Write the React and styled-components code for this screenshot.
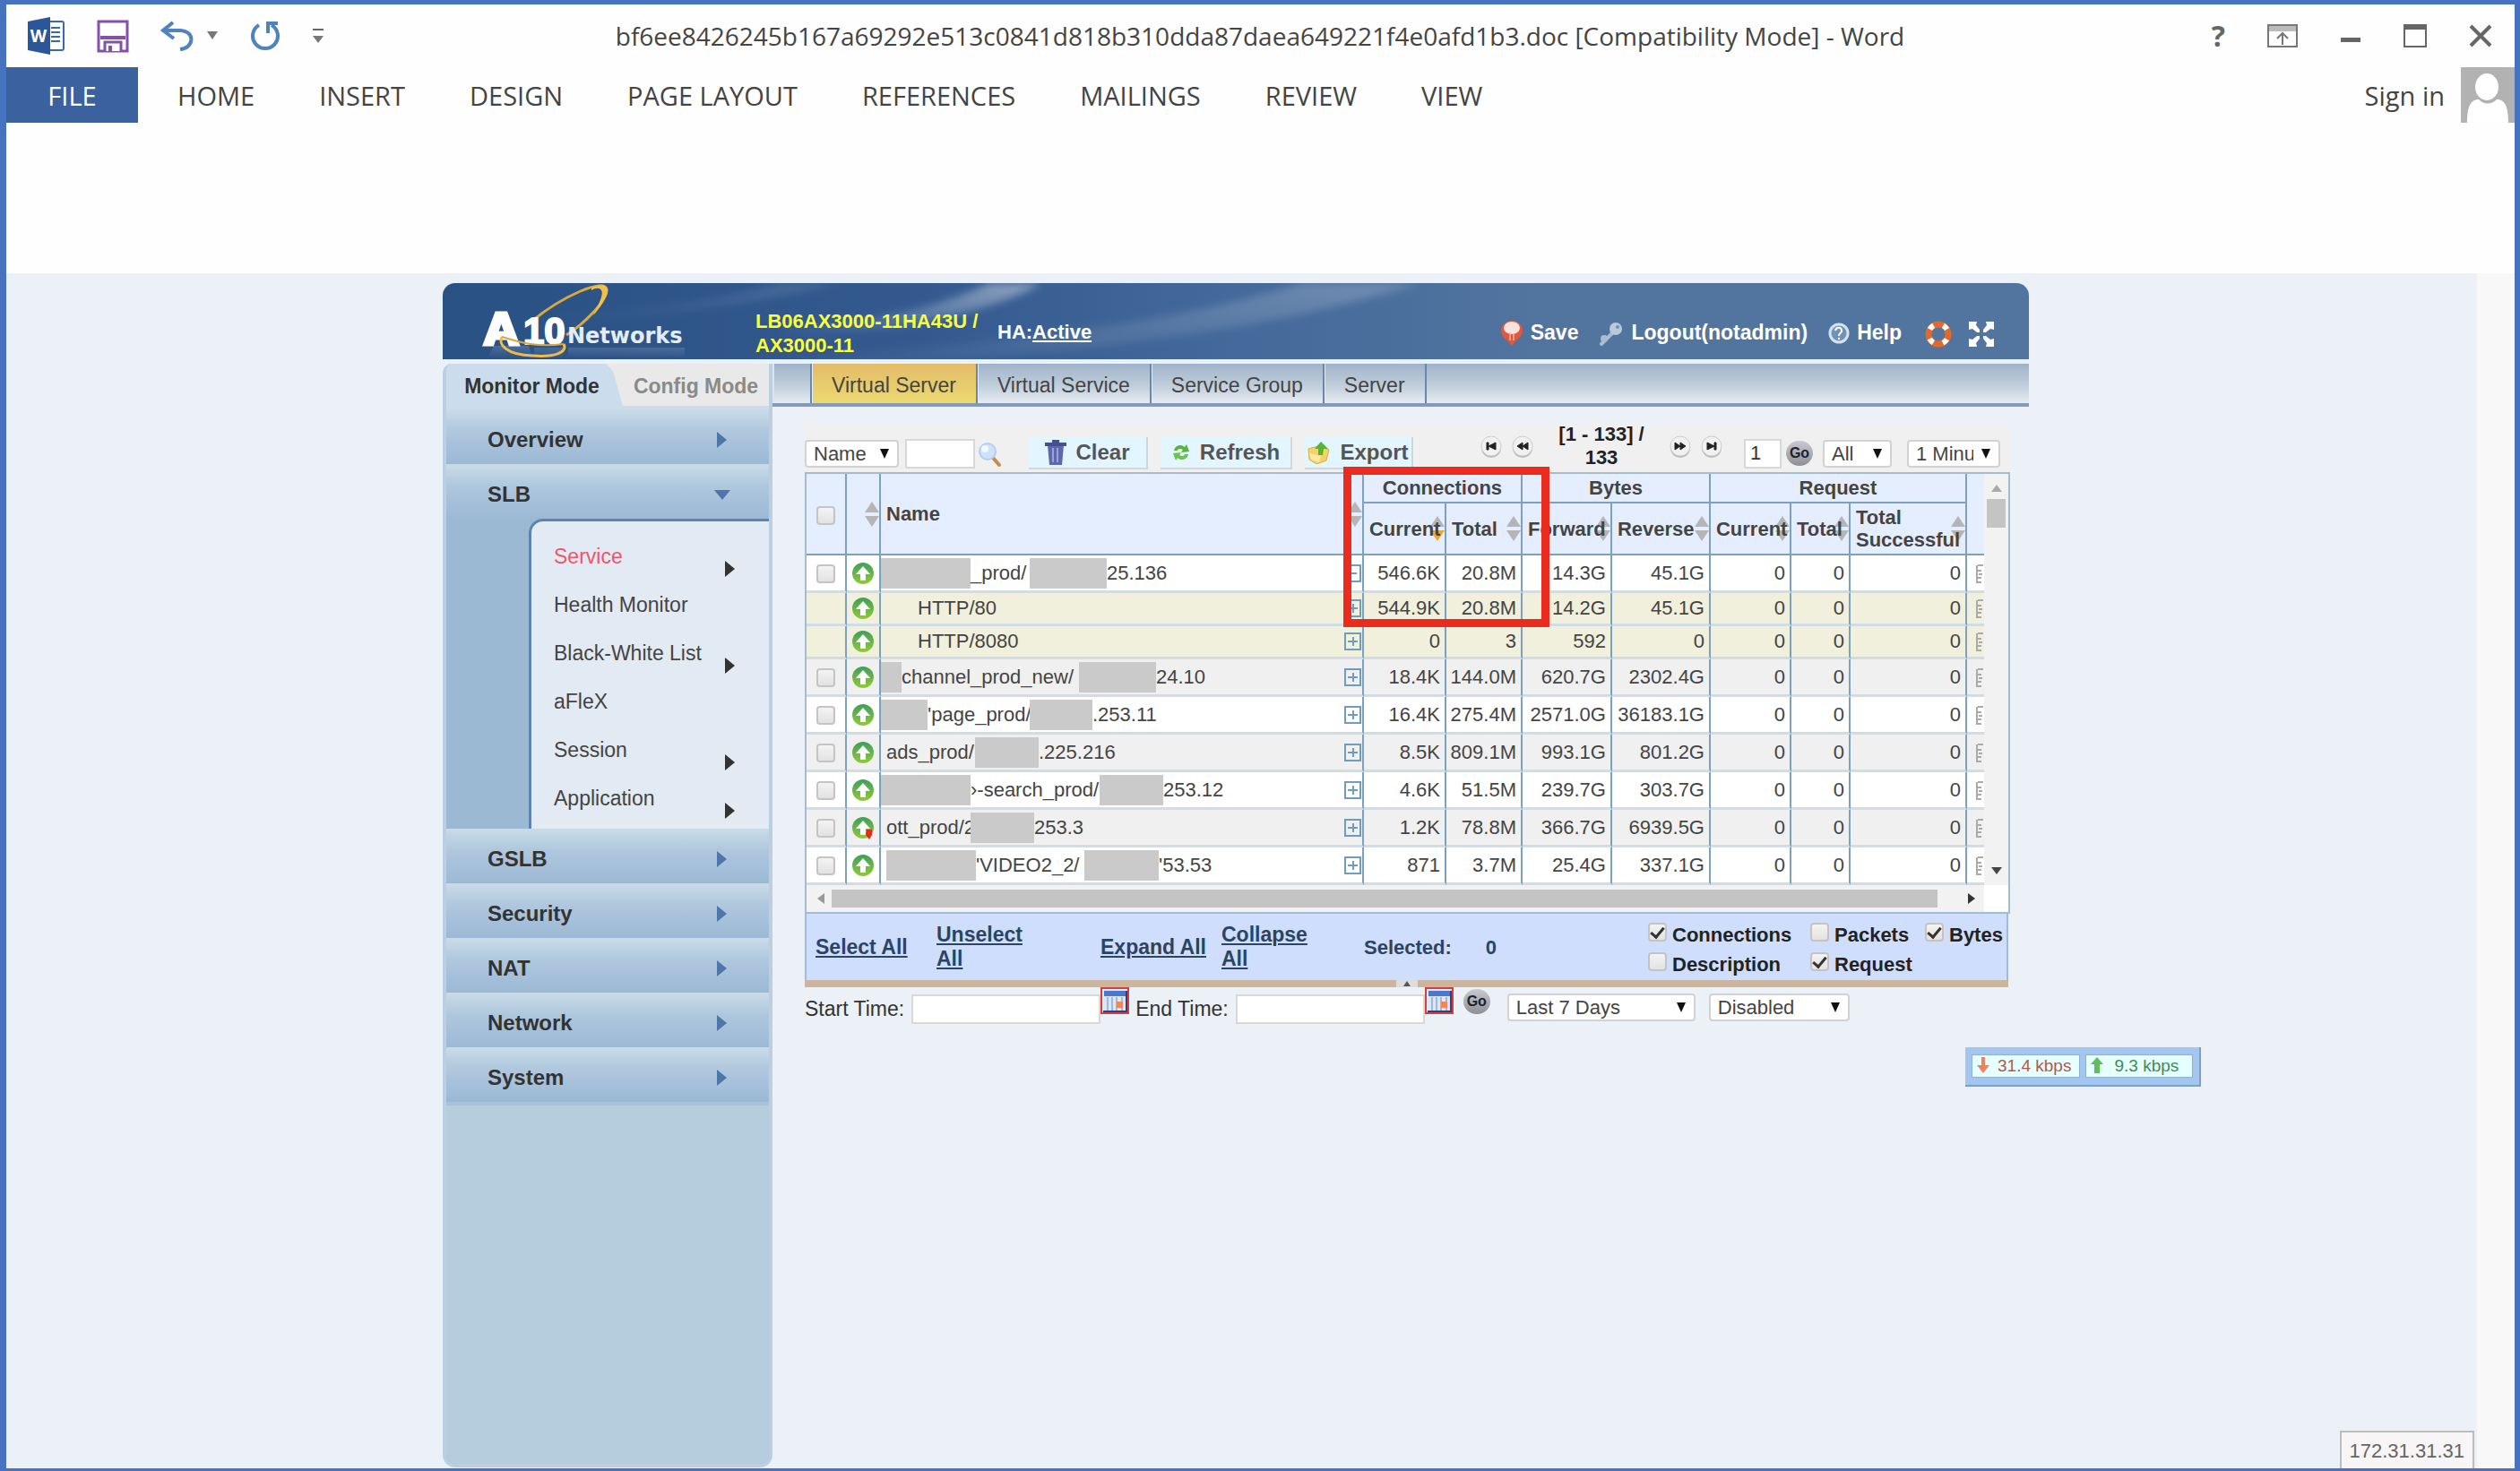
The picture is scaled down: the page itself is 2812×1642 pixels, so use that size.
import React from 'react'
import styled, {createGlobalStyle} from 'styled-components'

const GlobalStyle = createGlobalStyle`
    * { box-sizing: border-box; }
    body { margin: 0; }
    button, input, select { font: inherit; color: inherit; margin: 0; }
    button { border: 0; background: none; padding: 0; cursor: pointer; }
`

const ribbonTabs = ['HOME', 'INSERT', 'DESIGN', 'PAGE LAYOUT', 'REFERENCES', 'MAILINGS', 'REVIEW', 'VIEW']
const subMenu = [
    {label: 'Service', active: true, more: true},
    {label: 'Health Monitor'},
    {label: 'Black-White List', more: true},
    {label: 'aFleX'},
    {label: 'Session', more: true},
    {label: 'Application', more: true},
]
const lowerMenu = ['GSLB', 'Security', 'NAT', 'Network', 'System']
const columns = [45, 38, null, 92, 85, 100, 110, 90, 66, 130, 19]

// mask = width of a hidden part of the name, w = width kept for a visible part
const rows = [
    {name: [{mask: 100}, {t: '_prod/', w: 66}, {mask: 86}, {t: '25.136'}], open: true, data: ['546.6K', '20.8M', '14.3G', '45.1G']},
    {sub: 'HTTP/80', data: ['544.9K', '20.8M', '14.2G', '45.1G']},
    {sub: 'HTTP/8080', data: ['0', '3', '592', '0']},
    {name: [{mask: 23}, {t: 'channel_prod_new/', w: 198}, {mask: 86}, {t: '24.10'}], data: ['18.4K', '144.0M', '620.7G', '2302.4G']},
    {name: [{mask: 52}, {t: "'page_prod/", w: 114}, {mask: 70}, {t: '.253.11'}], data: ['16.4K', '275.4M', '2571.0G', '36183.1G']},
    {name: [{t: 'ads_prod/', w: 99}, {mask: 71}, {t: '.225.216'}], data: ['8.5K', '809.1M', '993.1G', '801.2G']},
    {name: [{mask: 100}, {t: '›-search_prod/', w: 144}, {mask: 71}, {t: '253.12'}], data: ['4.6K', '51.5M', '239.7G', '303.7G']},
    {name: [{t: 'ott_prod/2', w: 94}, {mask: 71}, {t: '253.3'}], warn: true, data: ['1.2K', '78.8M', '366.7G', '6939.5G']},
    {name: [{mask: 100}, {t: "'VIDEO2_2/", w: 121}, {mask: 83}, {t: "'53.53"}], inset: true, data: ['871', '3.7M', '25.4G', '337.1G']},
]

const WordIcon = () => (
    <svg width="42" height="42" viewBox="0 0 42 42" aria-hidden="true">
        <rect x="20" y="5" width="20" height="32" rx="2" fill="#fff" stroke="#3b69b0" strokeWidth="2"/>
        <path d="M26 12h10M26 17h10M26 22h10M26 27h10" stroke="#3b69b0" strokeWidth="2"/>
        <path d="M0 5L25 0V42L0 37z" fill="#2b579a"/>
        <text x="12" y="28" textAnchor="middle" fontSize="19" fontWeight="700" fill="#fff" fontFamily="Open Sans, sans-serif">W</text>
    </svg>
)
const DiskIcon = () => (
    <svg width="36" height="37" viewBox="0 0 36 37" aria-hidden="true">
        <path d="M2 2H34V35H2z" fill="#fff" stroke="#8450a8" strokeWidth="3"/>
        <path d="M4 20H32" stroke="#8450a8" strokeWidth="4"/>
        <path d="M9 35V25H27V35" fill="#fff" stroke="#8450a8" strokeWidth="3"/>
        <path d="M13 29h4v6h-4z" fill="#8450a8"/>
    </svg>
)
const UndoIcon = () => (
    <svg width="37" height="34" viewBox="0 0 37 34" fill="none" stroke="#4f83bd" strokeWidth="4" aria-hidden="true">
        <path d="M14 2L3 11L15 20M4 11H22C40 12 37 31 22 32"/>
    </svg>
)
const RedoIcon = () => (
    <svg width="34" height="34" viewBox="0 0 34 34" fill="none" stroke="#4f83bd" strokeWidth="4" aria-hidden="true">
        <path d="M10 5A14 14 0 1 0 24 5M18 3H31M20 2V14"/>
    </svg>
)
const CaretIcon = ({bar}) => (
    <svg width="14" height="18" viewBox="0 0 14 18" aria-hidden="true">
        {bar && <path d="M1 2H13" stroke="#666" strokeWidth="2"/>}
        <path d={bar ? 'M1 9H13L7 17z' : 'M1 4H13L7 13z'} fill="#777"/>
    </svg>
)
const Avatar = () => (
    <svg width="60" height="62" viewBox="0 0 60 62" aria-hidden="true">
        <path d="M0 0H60V62H0z" fill="#b2b2b2"/>
        <path d="M7 62C7 42 12 36 20 36C26 42 34 42 40 36C48 36 53 42 53 62z" fill="#fff"/>
        <ellipse cx="29" cy="22" rx="13" ry="15" fill="#fff"/>
    </svg>
)
const Logo = () => (
    <svg width="240" height="85" viewBox="0 0 240 85" role="img" aria-label="A10 Networks">
        <defs>
            <linearGradient id="fade" x1="0" y1="0" x2="0" y2="1">
                <stop offset="0" stopColor="#a9bdd8" stopOpacity="0.5"/>
                <stop offset="1" stopColor="#a9bdd8" stopOpacity="0"/>
            </linearGradient>
        </defs>
        <path d="M15 70H54L58 84H8zM60 72H92V84H60zM98 72H228V82H98z" fill="url(#fade)" opacity="0.5"/>
        <path d="M58 42C90 16 140 -8 141 8C140 20 118 44 96 58" fill="none" stroke="#d9a940" strokeWidth="3"/>
        <path d="M124 5C134 1 144 0 142 11C140 18 134 27 126 36C132 24 138 12 135 8C133 5 129 5 124 8z" fill="#f2bf4c"/>
        <text x="4" y="69" fontSize="50" fontWeight="700" fill="#fff" stroke="#fff" strokeWidth="3" fontFamily="DejaVu Sans, sans-serif">A</text>
        <text x="48" y="68" fontSize="42" fontWeight="700" fill="#fff" stroke="#fff" strokeWidth="2" fontFamily="Liberation Sans, sans-serif">10</text>
        <text x="97" y="67" fontSize="24" fontWeight="700" fill="#e4ecf6" fontFamily="DejaVu Sans, sans-serif">Networks</text>
        <path d="M24 60C20 68 28 80 58 81C84 83 98 77 93 68" fill="none" stroke="#f0bb4b" strokeWidth="3"/>
        <path d="M24 60C44 66 62 72 93 68" fill="none" stroke="#d9a940" strokeWidth="2"/>
    </svg>
)
const HeaderGlow = () => (
    <GlowSvg viewBox="0 0 1770 85" preserveAspectRatio="none" aria-hidden="true">
        <defs>
            <linearGradient id="ray" x1="0" y1="1" x2="1" y2="0">
                <stop offset="0" stopColor="#fff" stopOpacity="0"/>
                <stop offset="1" stopColor="#fff" stopOpacity="0.42"/>
            </linearGradient>
            <filter id="soft"><feGaussianBlur stdDeviation="5"/></filter>
        </defs>
        <g filter="url(#soft)" fill="url(#ray)">
            <path d="M380 50C480 45 560 25 610 0H668C610 35 500 54 380 60z"/>
            <path d="M330 85C560 75 800 50 960 0H1090C900 60 640 85 440 95z" opacity="0.5"/>
            <path d="M130 36C260 28 330 12 380 0H440C340 26 240 38 130 44z" opacity="0.3"/>
        </g>
    </GlowSvg>
)
const BulbIcon = () => (
    <svg width="26" height="30" viewBox="0 0 26 30" aria-hidden="true">
        <path d="M13 1C20 1 25 6 25 12C25 18 20 21 17 24L13 29L9 24C6 21 1 18 1 12C1 6 6 1 13 1z" fill="#e2583f"/>
        <ellipse cx="13" cy="9" rx="9" ry="7" fill="#fbe3dc"/>
        <path d="M11 16V23M15 16V23" stroke="#f09a86" strokeWidth="2"/>
    </svg>
)
const KeyIcon = () => (
    <svg width="28" height="28" viewBox="0 0 28 28" aria-hidden="true">
        <path d="M3 26L16 13" stroke="#a9bcd2" strokeWidth="4" strokeLinecap="round"/>
        <circle cx="19" cy="9" r="7" fill="#b9c9dc"/>
        <circle cx="6" cy="20" r="4" fill="#a9bcd2"/>
        <circle cx="21" cy="7" r="2" fill="#6f8fb4"/>
    </svg>
)
const HelpIcon = () => (
    <svg width="24" height="26" viewBox="0 0 24 26" aria-hidden="true">
        <circle cx="12" cy="13" r="10" fill="#6f92b8" stroke="#d5e2ee" strokeWidth="3"/>
        <path d="M8 10C9 5 16 6 15 11C14 13 12 13 12 16M12 18V20" fill="none" stroke="#fff" strokeWidth="2"/>
    </svg>
)
const RingIcon = () => (
    <svg width="30" height="30" viewBox="0 0 30 30" fill="none" aria-hidden="true">
        <circle cx="15" cy="15" r="11" stroke="#e3682c" strokeWidth="7"/>
        <circle cx="15" cy="15" r="11" stroke="#fff" strokeWidth="6" strokeDasharray="6 11" strokeDashoffset="-6"/>
    </svg>
)
const ExpandIcon = () => (
    <svg width="30" height="30" viewBox="0 0 30 30" aria-hidden="true">
        <path d="M1 1H10L9 5L13 10V13H10L5 9L1 10zM29 1V10L25 9L20 13H17V10L21 5L20 1zM1 29V20L5 21L10 17H13V20L9 25L10 29zM29 29H20L21 25L17 20V17H20L25 21L29 20z" fill="#fff"/>
    </svg>
)
const Triangle = ({color = '#4f76a8', down}) => (
    <svg width="18" height="18" viewBox="0 0 18 18" aria-hidden="true">
        <path d={down ? 'M0 4H18L9 15z' : 'M3 0L14 9L3 18z'} fill={color}/>
    </svg>
)
const SearchIcon = () => (
    <svg width="28" height="32" viewBox="0 0 28 32" aria-hidden="true">
        <path d="M18 21L25 29" stroke="#c98a4c" strokeWidth="4" strokeLinecap="round"/>
        <circle cx="12" cy="14" r="9" fill="#cfe2fb" stroke="#b5cef0" strokeWidth="2"/>
        <circle cx="9" cy="11" r="4" fill="#f2f8ff"/>
    </svg>
)
const TrashIcon = () => (
    <svg width="24" height="28" viewBox="0 0 24 28" aria-hidden="true">
        <path d="M3 6H21L19 28H5z" fill="#5d68ad"/>
        <path d="M0 3H8V0H16V3H24V7H0z" fill="#454f94"/>
        <path d="M9 9V25M14 9V25" stroke="#98a3d6" strokeWidth="2"/>
    </svg>
)
const RefreshIcon = () => (
    <svg width="22" height="26" viewBox="0 0 22 26" aria-hidden="true">
        <path d="M3 11C4 5 11 3 15 7L17 4L20 12L11 13L13 10C10 8 7 9 7 11z" fill="#58b43c"/>
        <path d="M19 15C18 21 11 23 7 19L5 22L2 14L11 13L9 16C12 18 15 17 15 15z" fill="#6cc24a"/>
    </svg>
)
const ExportIcon = () => (
    <svg width="26" height="26" viewBox="0 0 26 26" aria-hidden="true">
        <path d="M1 9L12 6L24 10L21 22L10 26L2 21z" fill="#f3d36a" stroke="#d8ae3c"/>
        <path d="M15 1L23 9H18L17 16H12V9H8z" fill="#55b432"/>
        <path d="M2 14L15 17L13 24L4 21z" fill="#fbe9a6"/>
    </svg>
)
const PagerIcon = ({d}) => (
    <svg width="24" height="26" viewBox="0 0 24 26" aria-hidden="true">
        <circle cx="12" cy="14" r="11" fill="#b9b9b9"/>
        <circle cx="12" cy="12" r="11" fill="#f1f1f1" stroke="#ccc"/>
        <path d={d} fill="#222" stroke="#222"/>
    </svg>
)
const UpIcon = ({warn}) => (
    <svg width="24" height="26" viewBox="0 0 24 26" aria-hidden="true">
        <defs>
            <linearGradient id="green" x1="0" y1="0" x2="0" y2="1">
                <stop offset="0" stopColor="#3f9f5a"/>
                <stop offset="1" stopColor="#93c93a"/>
            </linearGradient>
        </defs>
        <circle cx="12" cy="13" r="12" fill="url(#green)"/>
        <path d="M12 5L20 14H15V21H9V14H4z" fill="#fff"/>
        {warn && <path d="M16 15H22V21L19 26L15 21z" fill="#e02b1d"/>}
    </svg>
)
const BoxIcon = ({open}) => (
    <svg width="19" height="20" viewBox="0 0 19 20" fill="none" stroke="#6f9dbb" strokeWidth="2" aria-hidden="true">
        <path d={open ? 'M1 1H18V19H1zM5 10H14' : 'M1 1H18V19H1zM4 10H15M10 5V15'}/>
    </svg>
)
const SortIcon = ({desc}) => (
    <SortSvg width="16" height="28" viewBox="0 0 16 28" aria-hidden="true">
        <path d="M8 0L16 12H0z" fill="#b5b5b5"/>
        <path d="M8 28L16 16H0z" fill={desc ? '#f0a830' : '#b5b5b5'}/>
    </SortSvg>
)
const EdgeIcon = () => (
    <svg width="11" height="24" viewBox="0 0 11 24" fill="none" stroke="#aaa" strokeWidth="2" aria-hidden="true">
        <path d="M3 3V23M4 3H10M3 9H8M5 13H9M3 17H8M4 22H8"/>
    </svg>
)
const CalendarIcon = () => (
    <svg width="32" height="30" viewBox="0 0 32 30" aria-hidden="true">
        <rect x="1" y="1" width="30" height="28" fill="#dbe6f7" stroke="#d0403c" strokeWidth="2"/>
        <path d="M4 4H28V10H4z" fill="#4a78cf"/>
        <path d="M8 11V26M13 11V26M18 11V26M24 11V26" stroke="#9fb8e0" strokeWidth="2"/>
        <path d="M18 16H25V23H18z" fill="#f0875a"/>
        <path d="M3 27H29V4" fill="none" stroke="#2e3f86" strokeWidth="2"/>
    </svg>
)
const RateArrow = ({up}) => (
    <svg width="14" height="20" viewBox="0 0 14 20" aria-hidden="true">
        {up ? <path d="M7 0L14 8H10V18H4V8H0z" fill="#5fbf5a"/> : <path d="M5 0H9V9H14L7 18L0 9H5z" fill="#f08264"/>}
    </svg>
)

const DropDown = ({label, value, width}) => (
    <SelectWrap $width={width}>
        <select aria-label={label} defaultValue={value}>
            <option>{value}</option>
        </select>
    </SelectWrap>
)

const NameCell = ({row}) => (
    <NameFlex $sub={Boolean(row.sub)} $masked={!row.sub && !row.inset && Boolean(row.name[0].mask)}>
        {row.sub || row.name.map((part, i) => part.mask
            ? <Mask key={i} $width={part.mask}/>
            : <Visible key={i} $width={part.w}>{part.t}</Visible>
        )}
        <ExpandButton aria-label="Expand"><BoxIcon open={row.open}/></ExpandButton>
    </NameFlex>
)

const StatsTable = () => (
    <Table>
        <colgroup>
            {columns.map((w, i) => <Col key={i} $width={w}/>)}
        </colgroup>
        <thead>
            <GroupRow>
                <Th rowSpan={2} $center><Tick type="checkbox" aria-label="Select all rows"/></Th>
                <Th rowSpan={2}><SortIcon/></Th>
                <Th rowSpan={2}>Name<SortIcon/></Th>
                <Th colSpan={2} $center>Connections</Th>
                <Th colSpan={2} $center>Bytes</Th>
                <Th colSpan={3} $center>Request</Th>
                <Th rowSpan={2} $last/>
            </GroupRow>
            <HeadRow>
                <Th>Current<SortIcon desc/></Th>
                <Th>Total<SortIcon/></Th>
                <Th>Forward<SortIcon/></Th>
                <Th>Reverse<SortIcon/></Th>
                <Th>Current<SortIcon/></Th>
                <Th>Total<SortIcon/></Th>
                <Th>Total<br/>Successful<SortIcon/></Th>
            </HeadRow>
        </thead>
        <tbody>
            {rows.map((row, i) => (
                <Tr key={i} $sub={Boolean(row.sub)} $odd={i % 2 === 1}>
                    <Td $center>{!row.sub && <Tick type="checkbox" aria-label="Select row"/>}</Td>
                    <Td $center><UpIcon warn={row.warn}/></Td>
                    <Td $flush><NameCell row={row}/></Td>
                    {[...row.data, '0', '0', '0'].map((v, k) => <Td key={k}>{v}</Td>)}
                    <Td $last><EdgeIcon/></Td>
                </Tr>
            ))}
        </tbody>
    </Table>
)

const Check = ({label, checked}) => (
    <CheckLabel>
        <Tick type="checkbox" defaultChecked={checked}/>
        {label}
    </CheckLabel>
)

const App = () => {
    return (
        <Frame>
            <GlobalStyle/>
            <TitleBar>
                <QuickTools>
                    <WordIcon/>
                    <button aria-label="Save document"><DiskIcon/></button>
                    <UndoGroup>
                        <button aria-label="Undo"><UndoIcon/></button>
                        <button aria-label="Undo list"><CaretIcon/></button>
                    </UndoGroup>
                    <button aria-label="Repeat"><RedoIcon/></button>
                    <button aria-label="Customize"><CaretIcon bar/></button>
                </QuickTools>
                <Title>bf6ee8426245b167a69292e513c0841d818b310dda87daea649221f4e0afd1b3.doc [Compatibility Mode] - Word</Title>
                <WindowTools>
                    <HelpMark>?</HelpMark>
                    <button aria-label="Ribbon options">
                        <svg width="34" height="28" viewBox="0 0 34 28" fill="none" stroke="#777" strokeWidth="2">
                            <path d="M1 2H33V26H1z"/><path d="M2 6H32" stroke="#bbb" strokeWidth="6"/><path d="M17 24V12M11 17L17 11L23 17"/>
                        </svg>
                    </button>
                    <button aria-label="Minimize">
                        <svg width="24" height="28" viewBox="0 0 24 28"><path d="M1 16H23V21H1z" fill="#666"/></svg>
                    </button>
                    <button aria-label="Maximize">
                        <svg width="26" height="28" viewBox="0 0 26 28" fill="none" stroke="#666"><path d="M1 2H25V26H1z" strokeWidth="2"/><path d="M1 4H25" strokeWidth="6"/></svg>
                    </button>
                    <button aria-label="Close">
                        <svg width="26" height="28" viewBox="0 0 26 28" stroke="#666" strokeWidth="4"><path d="M2 3L24 25M24 3L2 25"/></svg>
                    </button>
                </WindowTools>
            </TitleBar>
            <Ribbon>
                <FileTab>FILE</FileTab>
                <RibbonTabs>
                    {ribbonTabs.map(tab => <RibbonTab key={tab}>{tab}</RibbonTab>)}
                </RibbonTabs>
                <SignIn>Sign in<Avatar/></SignIn>
            </Ribbon>
            <RibbonBlank/>
            <Page>
                <Console>
                    <Header>
                        <HeaderGlow/>
                        <Logo/>
                        <DeviceName>LB06AX3000-11HA43U /<br/>AX3000-11</DeviceName>
                        <HaState>HA:<a href="#ha">Active</a></HaState>
                        <HeaderLinks>
                            <HeaderLink href="#save"><BulbIcon/>Save</HeaderLink>
                            <HeaderLink href="#logout"><KeyIcon/>Logout(notadmin)</HeaderLink>
                            <HeaderLink href="#help"><HelpIcon/>Help</HeaderLink>
                        </HeaderLinks>
                        <HeaderButtons>
                            <button aria-label="Support"><RingIcon/></button>
                            <button aria-label="Full screen"><ExpandIcon/></button>
                        </HeaderButtons>
                    </Header>
                    <Columns>
                        <Sidebar>
                            <ModeTabs>
                                <ModeTab $active>Monitor Mode</ModeTab>
                                <ModeTab>Config Mode</ModeTab>
                            </ModeTabs>
                            <MenuItem>Overview<Triangle/></MenuItem>
                            <MenuItem>SLB<Triangle down/></MenuItem>
                            <SubMenuArea>
                                <SubMenu>
                                    {subMenu.map(item => (
                                        <SubItem key={item.label} href="#menu" $active={item.active}>
                                            {item.label}
                                            {item.more && <SubArrow><Triangle color="#333"/></SubArrow>}
                                        </SubItem>
                                    ))}
                                </SubMenu>
                            </SubMenuArea>
                            {lowerMenu.map(item => <MenuItem key={item}>{item}<Triangle/></MenuItem>)}
                            <SidebarRest/>
                        </Sidebar>
                        <Main>
                            <TabBar>
                                <Tab href="#vs" $active>Virtual Server</Tab>
                                <Tab href="#vsv">Virtual Service</Tab>
                                <Tab href="#sg">Service Group</Tab>
                                <Tab href="#s">Server</Tab>
                            </TabBar>
                            <Content>
                                <Toolbar>
                                    <DropDown label="Filter by" value="Name" width={105}/>
                                    <TextBox $width={78} aria-label="Filter text"/>
                                    <button aria-label="Search"><SearchIcon/></button>
                                    <Actions>
                                        <Action $width={133}><TrashIcon/>Clear</Action>
                                        <Action $width={147}><RefreshIcon/>Refresh</Action>
                                        <Action $width={121}><ExportIcon/>Export</Action>
                                    </Actions>
                                    <Pager>
                                        <button aria-label="First page"><PagerIcon d="M7 8H9V16H7zM17 8V16L9 12z"/></button>
                                        <button aria-label="Previous page"><PagerIcon d="M12 8V16L6 12zM18 8V16L12 12z"/></button>
                                        <PagerText>[1 - 133] / 133</PagerText>
                                        <button aria-label="Next page"><PagerIcon d="M6 8V16L12 12zM12 8V16L18 12z"/></button>
                                        <button aria-label="Last page"><PagerIcon d="M15 8H17V16H15zM7 8V16L15 12z"/></button>
                                    </Pager>
                                    <PageJump>
                                        <TextBox $width={42} aria-label="Page" defaultValue="1"/>
                                        <GoButton>Go</GoButton>
                                    </PageJump>
                                    <Limits>
                                        <DropDown label="Show" value="All" width={77}/>
                                        <DropDown label="Interval" value="1 Minutes" width={104}/>
                                    </Limits>
                                </Toolbar>
                                <TableFrame>
                                    <TableBody>
                                        <StatsTable/>
                                        <VerticalBar>
                                            <svg width="12" height="8" viewBox="0 0 12 8"><path d="M0 8H12L6 0z" fill="#aaa"/></svg>
                                            <VerticalThumb/>
                                            <svg width="12" height="8" viewBox="0 0 12 8"><path d="M0 0H12L6 8z" fill="#444"/></svg>
                                        </VerticalBar>
                                    </TableBody>
                                    <HorizontalBar>
                                        <svg width="8" height="12" viewBox="0 0 8 12"><path d="M8 0V12L0 6z" fill="#999"/></svg>
                                        <HorizontalThumb/>
                                        <svg width="8" height="12" viewBox="0 0 8 12"><path d="M0 0V12L8 6z" fill="#333"/></svg>
                                    </HorizontalBar>
                                    <Highlight/>
                                </TableFrame>
                                <SelectBar>
                                    <BarLink href="#select">Select All</BarLink>
                                    <BarLink href="#unselect">Unselect<br/>All</BarLink>
                                    <BarLink href="#expand">Expand All</BarLink>
                                    <BarLink href="#collapse">Collapse<br/>All</BarLink>
                                    <Selected>Selected:<span>0</span></Selected>
                                    <Checks>
                                        <Check label="Connections" checked/>
                                        <Check label="Packets"/>
                                        <Check label="Bytes" checked/>
                                        <Check label="Description"/>
                                        <Check label="Request" checked/>
                                    </Checks>
                                </SelectBar>
                                <Splitter>
                                    <svg width="24" height="8" viewBox="0 0 24 8" aria-hidden="true"><path d="M0 0H24V8H0z" fill="#ddd"/><path d="M12 1L16 7H8z" fill="#555"/></svg>
                                </Splitter>
                                <TimeForm>
                                    <TimeField>Start Time:<TextBox $width={211}/></TimeField>
                                    <IconButton type="button" aria-label="Pick start time"><CalendarIcon/></IconButton>
                                    <TimeField>End Time:<TextBox $width={211}/></TimeField>
                                    <IconButton type="button" aria-label="Pick end time"><CalendarIcon/></IconButton>
                                    <GoSlot><GoButton type="button">Go</GoButton></GoSlot>
                                    <Ranges>
                                        <DropDown label="Range" value="Last 7 Days" width={210}/>
                                        <DropDown label="State" value="Disabled" width={157}/>
                                    </Ranges>
                                </TimeForm>
                            </Content>
                        </Main>
                    </Columns>
                </Console>
                <RateWidget>
                    <Rate><RateArrow/>31.4 kbps</Rate>
                    <Rate $up><RateArrow up/>9.3 kbps</Rate>
                </RateWidget>
                <Status>172.31.31.31</Status>
            </Page>
        </Frame>
    )
}

const Frame = styled.div`
    display: flex;
    flex-direction: column;
    min-height: 100vh;
    border: solid #4672c0;
    border-width: 5px 6px 3px 7px;
    background: #fefefe;
    color: #444;
    font-family: 'Open Sans', sans-serif;
    font-size: 29px;
`
const TitleBar = styled.header`
    display: grid;
    grid-template-columns: 1fr auto 1fr;
    align-items: center;
    height: 70px;
    padding: 0 25px 0 24px;
`
const QuickTools = styled.div`
    display: flex;
    align-items: center;
    gap: 35px;
    button { display: flex; }
`
const UndoGroup = styled.div`
    display: flex;
    align-items: center;
    gap: 14px;
`
const Title = styled.h1`
    margin: 0;
    font-size: 28px;
    font-weight: 400;
    white-space: nowrap;
`
const WindowTools = styled.div`
    display: flex;
    align-items: center;
    justify-content: flex-end;
    gap: 47px;
    button { display: flex; }
`
const HelpMark = styled.button`
    font-size: 32px;
    line-height: 32px;
    font-weight: 700;
    color: #666;
`
const Ribbon = styled.nav`
    display: flex;
    align-items: stretch;
    height: 62px;
`
const FileTab = styled.button`
    width: 147px;
    background: #3b619f;
    color: #fff;
`
const RibbonTabs = styled.div`
    display: flex;
    flex: 1;
    padding-left: 8px;
`
const RibbonTab = styled.button`
    padding: 0 36px;
`
const SignIn = styled.button`
    display: flex;
    align-items: center;
    gap: 18px;
`
const RibbonBlank = styled.div`
    height: 168px;
`
const Page = styled.main`
    position: relative;
    display: flex;
    flex: 1;
    padding: 11px 500px 1px 487px;
    border-right: 42px solid #f8f8f8;
    background: #ebf1f6;
    color: #333;
    font-family: 'Liberation Sans', sans-serif;
    font-size: 22px;
`
const Console = styled.div`
    display: flex;
    flex-direction: column;
    flex: 1;
    min-width: 0;
`
const Header = styled.div`
    position: relative;
    display: flex;
    align-items: center;
    height: 85px;
    padding: 0 38px 0 42px;
    border-radius: 14px 14px 0 0;
    overflow: hidden;
    background: linear-gradient(90deg, #2a5183, #33598f 30%, #44699a 50%, #52759f 70%);
    color: #fff;
    font-weight: 700;
`
const GlowSvg = styled.svg`
    position: absolute;
    inset: 0;
    width: 100%;
    height: 100%;
`
const DeviceName = styled.div`
    position: relative;
    align-self: flex-end;
    width: 270px;
    margin-left: 67px;
    padding-bottom: 2px;
    color: #fbff3c;
    line-height: 27px;
    white-space: nowrap;
`
const HaState = styled.div`
    position: relative;
    padding-top: 24px;
    a { color: inherit; }
`
const HeaderLinks = styled.div`
    position: relative;
    display: flex;
    gap: 23px;
    margin-left: auto;
    padding-top: 26px;
    font-size: 23px;
`
const HeaderLink = styled.a`
    display: flex;
    align-items: center;
    gap: 8px;
    color: inherit;
    text-decoration: none;
`
const HeaderButtons = styled.div`
    position: relative;
    display: flex;
    gap: 18px;
    margin-left: 26px;
    padding-top: 28px;
    button { display: flex; }
`
const Columns = styled.div`
    display: flex;
    flex: 1;
    padding-top: 5px;
`
const Sidebar = styled.aside`
    display: flex;
    flex-direction: column;
    width: 368px;
    border: solid #bccfe2;
    border-width: 0 4px 4px 4px;
    border-radius: 10px 0 14px 14px;
    background: #9cb9d4;
    color: #333;
    font-size: 24px;
    overflow: hidden;
`
const ModeTabs = styled.div`
    display: flex;
    height: 51px;
    margin: 0 -4px;
    background: linear-gradient(#e9e9e9 47px, #cbdded 47px);
`
const ModeTab = styled.button`
    width: ${p => p.$active ? '203px' : '165px'};
    padding-right: ${p => p.$active ? '4px' : '6px'};
    clip-path: ${p => p.$active ? 'polygon(0 0, 182px 0, 190px 8px, 202px 51px, 0 51px)' : 'none'};
    background: ${p => p.$active ? '#cbdded' : 'none'};
    color: ${p => p.$active ? '#333' : '#8a8a8a'};
    font-size: 23px;
    font-weight: 700;
    white-space: nowrap;
`
const MenuItem = styled.button`
    display: flex;
    align-items: center;
    justify-content: space-between;
    flex: none;
    height: 61px;
    padding: 3px 43px 0 46px;
    border-top: 3px solid #c8dae8;
    background: linear-gradient(#c6d9e6, #b0c8de 35%, #a3bed9 75%, #9cb9d4);
    font-weight: 700;
    text-align: left;
`
const SubMenuArea = styled.div`
    padding-left: 92px;
`
const SubMenu = styled.div`
    height: 346px;
    padding-top: 12px;
    border: solid #5f83ae;
    border-width: 3px 0 0 3px;
    border-radius: 16px 0 0 0;
    background: #e2eaf3;
`
const SubItem = styled.a`
    display: flex;
    justify-content: space-between;
    height: 54px;
    padding: 0 34px 0 25px;
    color: ${p => p.$active ? '#f0566a' : '#444'};
    font-size: 23px;
    line-height: 54px;
    text-decoration: none;
`
const SubArrow = styled.span`
    display: flex;
    align-items: flex-end;
    padding-bottom: 4px;
`
const SidebarRest = styled.div`
    flex: 1;
    border-top: 4px solid #a9c2dc;
    background: #b6cddd;
`
const Main = styled.section`
    flex: 1;
    min-width: 0;
`
const TabBar = styled.nav`
    display: flex;
    height: 48px;
    padding-left: 42px;
    border-bottom: 4px solid #829bbb;
    background: linear-gradient(#9fb3c8, #c3d0dd 60%, #e6ecf2);
    box-shadow: inset 2px 0 #dde6ee;
`
const Tab = styled.a`
    display: flex;
    align-items: center;
    padding: 4px 22px 0;
    border: solid #6787ac;
    border-width: 0 2px 0 ${p => p.$active ? '2px' : '0'};
    background: ${p => p.$active ? 'linear-gradient(#e2bc68, #ecd972)' : 'none'};
    color: #444;
    font-size: 23px;
    text-decoration: none;
    box-shadow: inset 1px 0 #e6edf3;
`
const Content = styled.div`
    padding: 19px 21px 0 36px;
`
const Toolbar = styled.div`
    display: flex;
    align-items: center;
    height: 54px;
    padding: 12px 11px 0 0;
    background: #f0f0f0;
    button { display: flex; }
`
const SelectWrap = styled.span`
    position: relative;
    width: ${p => p.$width}px;
    select {
        width: 100%;
        height: 31px;
        padding: 0 28px 0 8px;
        border: 2px solid #d2d2d2;
        border-radius: 4px;
        background: #fff;
        color: #444;
        appearance: none;
        overflow: hidden;
    }
    &::after {
        content: '';
        position: absolute;
        top: 10px;
        right: 11px;
        border: solid transparent;
        border-width: 11px 5px 0;
        border-top-color: #111;
    }
`
const TextBox = styled.input`
    width: ${p => p.$width}px;
    height: 33px;
    padding: 0 5px;
    border: 2px solid #d8d8d8;
    background: #fff;
    ${Toolbar} > span + & { margin: 0 2px 0 7px; }
`
const Actions = styled.div`
    display: flex;
    gap: 14px;
    margin-left: 30px;
`
const Action = styled.button`
    align-items: center;
    justify-content: center;
    gap: 10px;
    width: ${p => p.$width}px;
    height: 36px;
    border: solid #cfd8dd;
    border-width: 0 2px 2px 0;
    background: #e3f5fe;
    color: #555;
    font-size: 24px;
    font-weight: 700;
`
const Pager = styled.div`
    display: flex;
    align-items: center;
    gap: 11px;
    height: 54px;
    margin: -14px 0 0 auto;
`
const PagerText = styled.div`
    width: 130px;
    padding: 0 10px 2px;
    color: #222;
    font-weight: 700;
    line-height: 26px;
    text-align: center;
`
const PageJump = styled.div`
    display: flex;
    align-items: center;
    gap: 5px;
    margin-left: 24px;
`
const GoButton = styled.button`
    align-items: center;
    justify-content: center;
    width: 30px;
    height: 28px;
    border-radius: 50%;
    background: linear-gradient(#c9c9d0, #8f8f98);
    color: #222;
    font-size: 16px;
    font-weight: 700;
`
const Limits = styled.div`
    display: flex;
    gap: 17px;
    margin-left: 11px;
`
const TableFrame = styled.div`
    position: relative;
    border: 2px solid #a3bcd4;
    background: #fff;
`
const TableBody = styled.div`
    display: flex;
`
const Table = styled.table`
    flex: 1;
    table-layout: fixed;
    width: 0;
    border-collapse: separate;
    border-spacing: 0;
    color: #444;
`
const Col = styled.col`
    width: ${p => p.$width ? `${p.$width}px` : 'auto'};
`
const GroupRow = styled.tr`
    height: 33px;
`
const HeadRow = styled.tr`
    height: 58px;
`
// the arrows sit behind the column titles
const SortSvg = styled.svg`
    position: absolute;
    z-index: -1;
    top: calc(50% - 14px);
    right: 0;
`
const Th = styled.th`
    position: relative;
    z-index: 0;
    padding: 0 0 0 ${p => p.$center ? '0' : '6px'};
    border: solid #7ba0c0;
    border-width: 0 ${p => p.$last ? '0' : '2px'} 2px 0;
    background: #e4eeff;
    line-height: 25px;
    text-align: ${p => p.$center ? 'center' : 'left'};
    vertical-align: middle;
`
const Tr = styled.tr`
    height: ${p => p.$sub ? '37px' : '42px'};
    background: ${p => p.$sub ? '#f1f0dc' : p.$odd ? '#f0f0f0' : '#fff'};
`
const Td = styled.td`
    height: inherit;
    padding: ${p => p.$flush || p.$center ? '0' : p.$last ? '0 0 0 7px' : '0 5px 0 0'};
    border-right: ${p => p.$last ? '0' : '2px solid #7ba0c0'};
    border-bottom: 3px solid #d0dde8;
    line-height: 24px;
    text-align: ${p => p.$center ? 'center' : p.$flush ? 'left' : 'right'};
    vertical-align: middle;
    svg { display: block; margin: 0 auto; }
`
const Tick = styled.input`
    display: inline-block;
    flex: none;
    width: 21px;
    height: 21px;
    border: 2px solid #c4c4c4;
    border-radius: 4px;
    background: linear-gradient(#f3f3f3, #e2e2e2);
    vertical-align: middle;
    appearance: none;
    &:checked::before {
        content: '';
        display: block;
        width: 6px;
        height: 12px;
        margin: 0 auto;
        border: solid #333;
        border-width: 0 3px 3px 0;
        transform: rotate(40deg);
    }
`
const NameFlex = styled.div`
    display: flex;
    align-items: center;
    height: 33px;
    padding-left: ${p => p.$sub ? '41px' : p.$masked ? '0' : '6px'};
    white-space: nowrap;
`
const Mask = styled.span`
    flex: none;
    width: ${p => p.$width}px;
    height: 34px;
    background: #cacaca;
`
const Visible = styled.span`
    flex: none;
    width: ${p => p.$width ? `${p.$width}px` : 'auto'};
`
const ExpandButton = styled.button`
    display: flex;
    margin-left: auto;
    padding-right: 1px;
`
const VerticalBar = styled.div`
    display: flex;
    flex-direction: column;
    align-items: center;
    width: 27px;
    padding: 12px 0;
    background: #f2f2f2;
`
const VerticalThumb = styled.div`
    width: 21px;
    height: 32px;
    margin: 8px 0 auto;
    background: #c4c4c4;
`
const HorizontalBar = styled.div`
    display: flex;
    align-items: center;
    height: 30px;
    margin-right: 27px;
    padding: 0 10px 0 12px;
    background: #f2f2f2;
`
const HorizontalThumb = styled.div`
    flex: 1;
    height: 20px;
    margin: 0 34px 0 8px;
    background: #c4c4c4;
`
const Highlight = styled.div`
    position: absolute;
    top: -8px;
    left: 599px;
    width: 230px;
    height: 179px;
    border: 9px solid #ea2b1d;
`
const SelectBar = styled.div`
    display: grid;
    grid-template-columns: 135px 183px 135px 159px 317px 1fr;
    align-items: center;
    height: 74px;
    padding-left: 10px;
    margin-right: 2px;
    border: solid #a3bcd4;
    border-width: 0 2px;
    background: #cedefc;
    color: #2c4464;
    line-height: 27px;
`
const BarLink = styled.a`
    color: inherit;
    font-size: 23px;
    font-weight: 700;
`
const Selected = styled.div`
    display: flex;
    gap: 38px;
    font-weight: 700;
`
const Checks = styled.div`
    display: grid;
    grid-template-columns: 181px 128px auto;
    row-gap: 6px;
    justify-content: start;
    padding-top: 5px;
    color: #222;
`
const CheckLabel = styled.label`
    display: flex;
    align-items: flex-start;
    gap: 6px;
    font-weight: 700;
`
const Splitter = styled.div`
    display: flex;
    justify-content: center;
    height: 8px;
    margin-right: 2px;
    background: #cdb49c;
`
const TimeForm = styled.form`
    display: flex;
    align-items: flex-start;
    height: 40px;
`
const TimeField = styled.label`
    display: flex;
    align-items: center;
    gap: 8px;
    margin-top: 8px;
    font-size: 23px;
`
const IconButton = styled.button`
    display: flex;
    margin-right: 7px;
`
const GoSlot = styled.div`
    display: flex;
    margin: 2px 0 0 4px;
`
const Ranges = styled.div`
    display: flex;
    gap: 15px;
    margin: 7px 0 0 19px;
`
const RateWidget = styled.div`
    position: absolute;
    top: 864px;
    right: 308px;
    display: flex;
    gap: 6px;
    width: 263px;
    height: 44px;
    padding: 8px 7px;
    border: solid #7d9fc9;
    border-width: 0 2px 2px 0;
    background: #a3c6f1;
`
const Rate = styled.div`
    display: flex;
    align-items: center;
    gap: ${p => p.$up ? '13px' : '9px'};
    flex: 1;
    padding-left: 5px;
    border: 1px solid #8fb0d2;
    background: #e6ffff;
    color: ${p => p.$up ? '#3f8a54' : '#b0584e'};
    font-size: 19px;
    white-space: nowrap;
`
const Status = styled.div`
    position: absolute;
    right: 3px;
    bottom: 0;
    height: 42px;
    padding: 0 9px;
    border: solid #bdbdbd;
    border-width: 2px 2px 0 2px;
    background: #f7f5f5;
    color: #666;
    line-height: 42px;
`

export default App
